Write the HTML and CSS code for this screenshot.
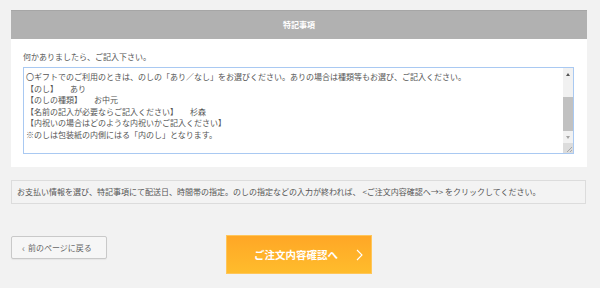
FILE: index.html
```html
<!DOCTYPE html>
<html lang="ja">
<head>
    <meta charset="UTF-8">
    <meta name="viewport" content="width=device-width, initial-scale=1.0">
    <title>特記事項</title>
    <link rel="stylesheet" href="styles.css">
</head>
<body>
    <main class="page">
        <section class="panel">
            <header class="panel-head">特記事項</header>
            <div class="panel-body">
                <p class="note-label">何かありましたら、ご記入下さい。</p>
                <div class="note-box">
                    <div class="note-text">〇ギフトでのご利用のときは、のしの「あり／なし」をお選びください。ありの場合は種類等もお選び、ご記入ください。<br>【のし】　　あり<br>【のしの種類】　　お中元<br>【名前の記入が必要ならご記入ください】　　杉森<br>【内祝いの場合はどのような内祝いかご記入ください】<br>※のしは包装紙の内側にはる「内のし」となります。</div>
                    <div class="scrollbar">
                        <span class="arrow up"></span>
                        <span class="track"><span class="thumb"></span></span>
                        <span class="arrow down"></span>
                        <span class="grip">
                            <svg width="9" height="9" viewBox="0 0 9 9"><path d="M8 3 L3 8 M8 6 L6 8" stroke="#9a9a9a" stroke-width="0.8" fill="none"/></svg>
                        </span>
                    </div>
                </div>
            </div>
        </section>

        <p class="info">お支払い情報を選び、特記事項にて配送日、時間帯の指定。のしの指定などの入力が終われば、 &lt;ご注文内容確認へ→&gt; をクリックしてください。</p>

        <div class="actions">
            <a href="#" class="back-button"><span class="back-arrow">‹</span>前のページに戻る</a>
            <a href="#" class="next-button">
                ご注文内容確認へ
                <svg width="7" height="12" viewBox="0 0 7 12"><path d="M1 1 L6 6 L1 11" stroke="#fff" stroke-width="1.1" fill="none"/></svg>
            </a>
        </div>
    </main>
</body>
</html>
```

FILE: styles.css
```css
body {
    font-family: "Noto Sans CJK JP", "Noto Sans", sans-serif;
    margin: 0;
    background: #f2f2f2;
    color: #444;
}

.page {
    padding: 10px 13px 0 11px;
}

.panel {
    background: #fff;
}

.panel-head {
    height: 28px;
    line-height: 28px;
    border-top: 1px solid #a6a6a6;
    background: #b1b1b1;
    color: #fff;
    font-size: 8px;
    font-weight: bold;
    text-align: center;
}

.panel-body {
    padding: 12px 13px 13px 12px;
}

.note-label {
    margin: 0 0 4px;
    font-size: 8px;
    line-height: 12px;
    color: #555;
}

.note-box {
    display: flex;
    height: 85px;
    border: 1px solid #a9c9f2;
    background: #fff;
}

.note-text {
    flex: 1;
    padding: 3px 2px;
    font-size: 8px;
    line-height: 11.5px;
    color: #555;
    white-space: nowrap;
    overflow: hidden;
}

.scrollbar {
    width: 10px;
    display: flex;
    flex-direction: column;
    background: #f1f1f1;
}

.arrow {
    height: 12px;
    display: flex;
    align-items: center;
    justify-content: center;
}

.arrow::before {
    content: "";
    border-left: 2.5px solid transparent;
    border-right: 2.5px solid transparent;
}

.arrow.up::before {
    border-bottom: 3px solid #555;
}

.arrow.down::before {
    border-top: 3px solid #a3a3a3;
}

.track {
    flex: 1;
    display: flex;
    flex-direction: column;
    padding-top: 17px;
}

.thumb {
    height: 34px;
    background: #c1c1c1;
}

.grip {
    height: 10px;
    background: #dcdcdc;
    display: flex;
    align-items: flex-end;
    justify-content: flex-end;
}

.info {
    margin: 13px 1px 0 0;
    height: 22px;
    line-height: 22px;
    padding: 0 5px;
    border: 1px solid #dcdcdc;
    background: #f3f3f3;
    font-size: 8px;
    color: #555;
}

.actions {
    display: grid;
    grid-template-columns: 1fr auto 1fr;
    align-items: start;
    margin-top: 31px;
}

.back-button {
    justify-self: start;
    display: flex;
    align-items: center;
    width: 94px;
    height: 21px;
    margin-top: 1px;
    border: 1px solid #c9c9c9;
    border-radius: 2px;
    background: #f6f6f6;
    color: #666;
    font-size: 8px;
    text-decoration: none;
    box-shadow: 0 1px 1px rgba(0, 0, 0, 0.05);
}

.back-arrow {
    width: 13px;
    text-align: right;
    margin-right: 3px;
    font-size: 10px;
    color: #888;
}

.next-button {
    display: flex;
    align-items: center;
    gap: 18px;
    width: 146px;
    height: 39px;
    box-sizing: border-box;
    padding-left: 27px;
    background: linear-gradient(#ffa726, #ffbc2c);
    border: 1px solid #ffc65a;
    color: #fff;
    font-size: 10.5px;
    font-weight: bold;
    text-decoration: none;
}
```
